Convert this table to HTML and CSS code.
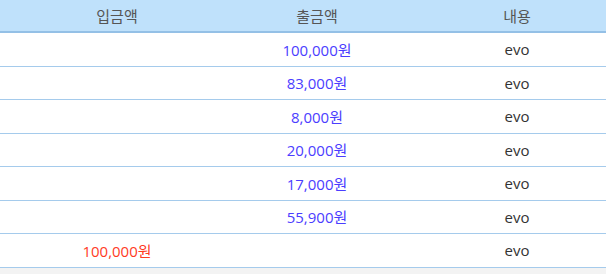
FILE: index.html
```html
<!DOCTYPE html>
<html lang="ko">
<head>
<meta charset="utf-8">
<link rel="stylesheet" href="styles.css">
</head>
<body>
<div class="table">
  <div class="row head">
    <div class="cell">입금액</div>
    <div class="cell">출금액</div>
    <div class="cell">내용</div>
  </div>
  <div class="row"><div class="cell"></div><div class="cell out">100,000원</div><div class="cell">evo</div></div>
  <div class="row"><div class="cell"></div><div class="cell out">83,000원</div><div class="cell">evo</div></div>
  <div class="row"><div class="cell"></div><div class="cell out">8,000원</div><div class="cell">evo</div></div>
  <div class="row"><div class="cell"></div><div class="cell out">20,000원</div><div class="cell">evo</div></div>
  <div class="row"><div class="cell"></div><div class="cell out">17,000원</div><div class="cell">evo</div></div>
  <div class="row"><div class="cell"></div><div class="cell out">55,900원</div><div class="cell">evo</div></div>
  <div class="row"><div class="cell in">100,000원</div><div class="cell"></div><div class="cell">evo</div></div>
</div>
</body>
</html>
```
FILE: styles.css
```css
html, body {
  margin: 0;
  padding: 0;
  background: #f3f3f3;
  overflow: hidden;
}
body {
  width: 606px;
  height: 274px;
  font-family: "Open Sans", "Noto Sans CJK KR", sans-serif;
  font-size: 15px;
  color: #333;
}
.table {
  width: 606px;
  background: #fff;
  overflow: hidden;
}
.row {
  display: grid;
  grid-template-columns: 17px 200px 200px 200px;
  height: 32.5px;
  border-bottom: 1px solid #a5cbec;
  align-items: center;
}
.row::before {
  content: "";
}
.row.head {
  height: 31px;
  background: #bfe1fb;
  border-bottom: 2px solid #94c0e6;
  color: #555;
}
.cell {
  text-align: center;
  white-space: nowrap;
}
.out { color: #4b3dff; }
.in { color: #ff3b1f; }
```
